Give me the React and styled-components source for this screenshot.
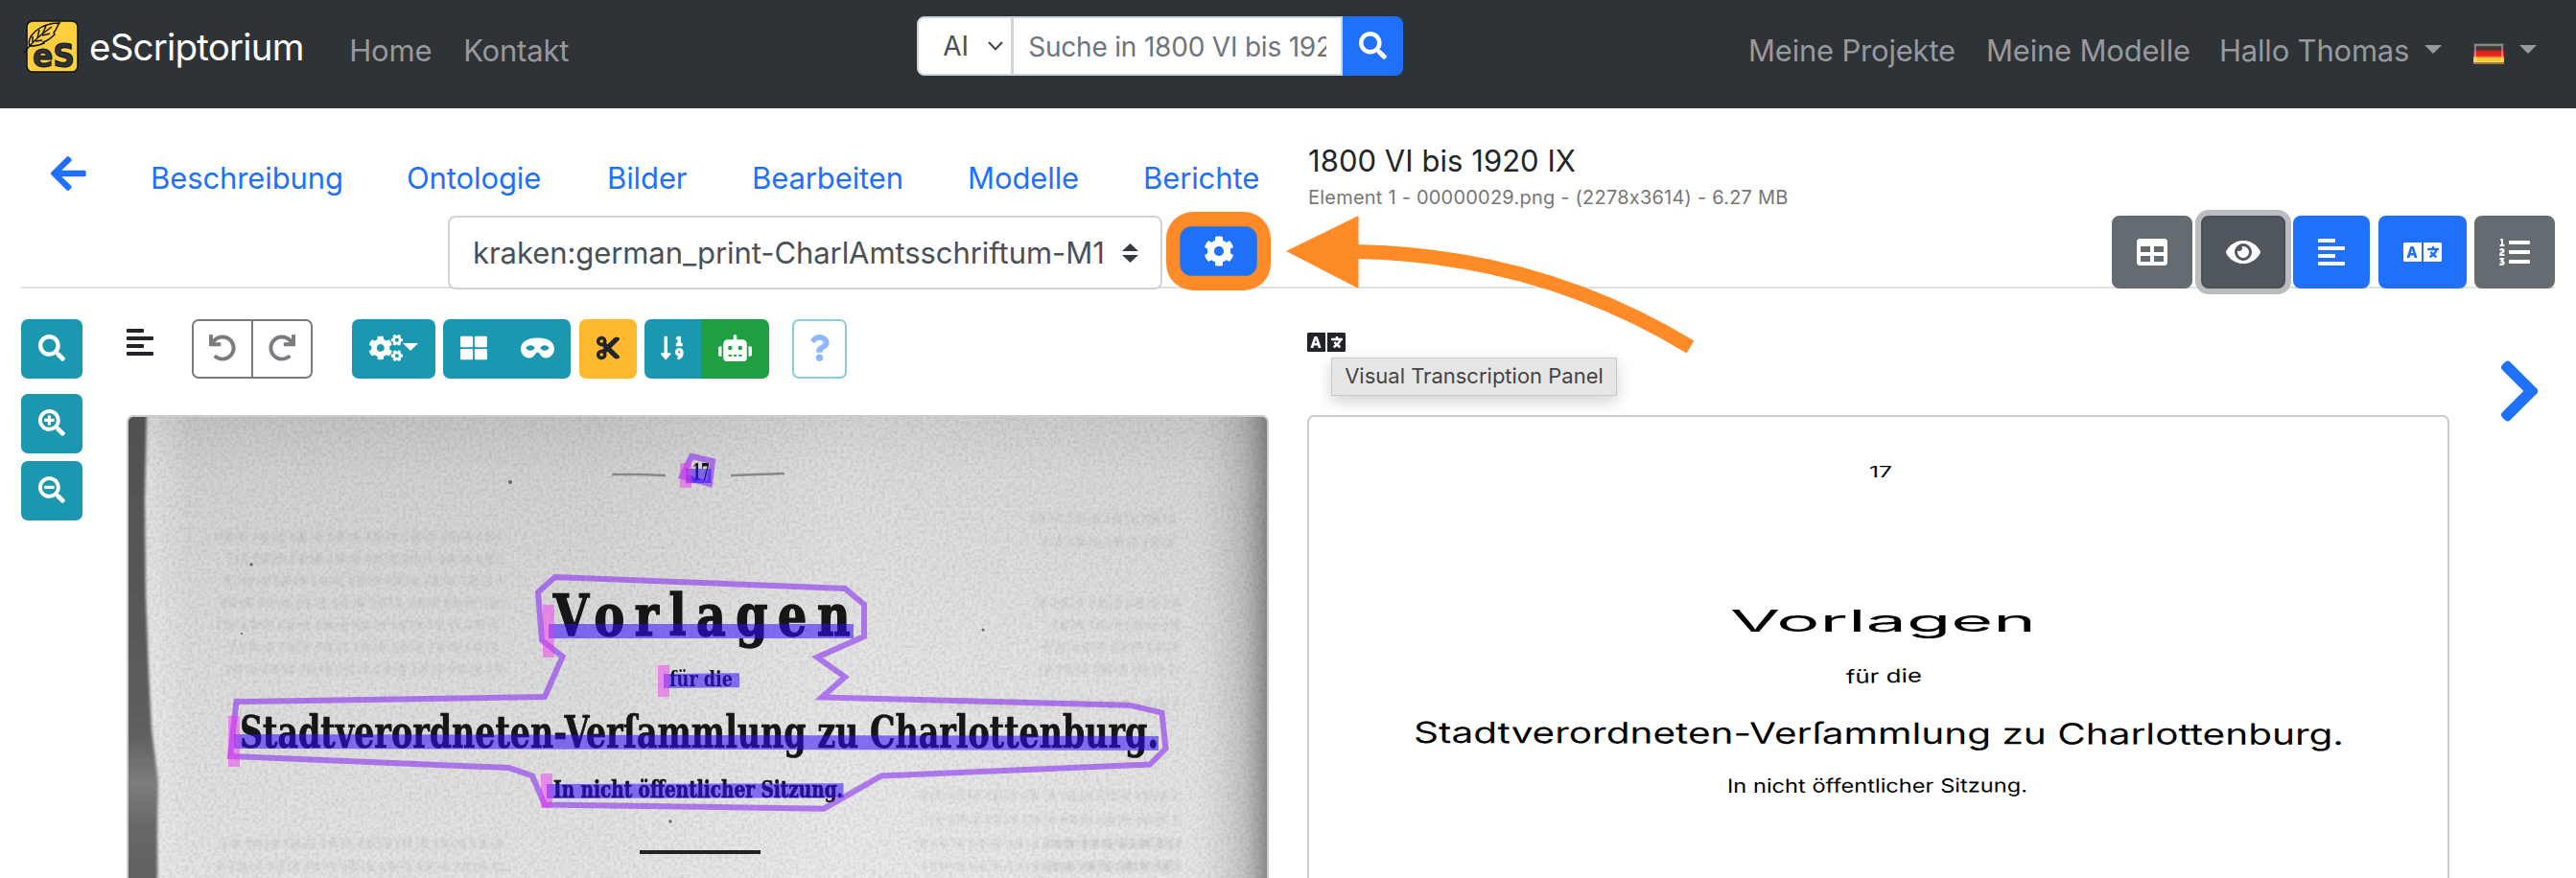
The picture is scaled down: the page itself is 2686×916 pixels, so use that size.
import React from "react";
import styled, { createGlobalStyle } from "styled-components";
import {
  FaAlignLeft,
  FaArrowLeft,
  FaChevronRight,
  FaCog,
  FaCogs,
  FaCut,
  FaEye,
  FaLanguage,
  FaListOl,
  FaMask,
  FaQuestion,
  FaRobot,
  FaSearch,
  FaSearchMinus,
  FaSearchPlus,
  FaSortNumericDown,
  FaTable,
  FaThLarge,
  FaUndo,
} from "react-icons/fa";

const GlobalStyle = createGlobalStyle`
  *, *::before, *::after { box-sizing: border-box; }
  body {
    margin: 0;
    background: #fff;
    color: #212529;
    font-family: Inter, "Liberation Sans", sans-serif;
    font-size: 31px;
    font-feature-settings: "calt" 0;
    overflow: hidden;
  }
  button, input { font-family: inherit; margin: 0; }
`;

const Page = styled.div`
  width: 2686px;
  height: 916px;
  overflow: hidden;
`;

/* Icon box: height in px, width in 512ths of the height, as in Font Awesome. */
const Glyph = styled.span`
  display: flex;
  flex: none;
  transform: ${(p) => (p.$mirror ? "scaleX(-1)" : "none")};

  && svg {
    height: ${(p) => p.$h || 28}px;
    width: ${(p) => ((p.$h || 28) * (p.$vw || 512)) / 512}px;
  }
`;

/* ---------- top bar ---------- */

const Navbar = styled.nav`
  display: flex;
  align-items: flex-start;
  height: 113px;
  padding: 0 40px 0 24px;
  background: #2e3338;
`;

const Brand = styled.a`
  display: flex;
  align-items: flex-start;
  width: 341px;
  padding-top: 19px;
  color: #fff;

  svg { flex: none; }
`;

const BrandName = styled.span`
  margin-left: 9px;
  padding-top: 6px;
  font-size: 38.5px;
  line-height: 48px;
  letter-spacing: -0.8px;
  white-space: nowrap;
`;

const NavItem = styled.a`
  display: flex;
  align-items: center;
  flex: none;
  width: ${(p) => p.$w}px;
  height: 48px;
  margin-top: 28px;
  color: #97999c;
  letter-spacing: -0.2px;
  white-space: nowrap;
`;

const Caret = styled.i`
  flex: none;
  margin: ${(p) => p.$m || "0"};
  border-top: ${(p) => p.$s || 9}px solid currentColor;
  border-left: ${(p) => p.$s || 9}px solid transparent;
  border-right: ${(p) => p.$s || 9}px solid transparent;
`;

const SearchGroup = styled.form`
  display: flex;
  width: 508px;
  height: 62px;
  margin: 17px 360px 0 312px;
`;

const ScopeSelect = styled.div`
  display: flex;
  align-items: center;
  justify-content: space-between;
  width: 100px;
  padding: 0 8px 0 25px;
  border: 2px solid #ced4da;
  border-radius: 8px 0 0 8px;
  background: #fff;
  color: #495057;
  font-size: 28px;
`;

const SearchField = styled.div`
  width: 345px;
  margin-left: -1px;
  padding: 0 15px;
  border: 2px solid #ced4da;
  background: #fff;
  color: #6c757d;
  font-size: 28px;
  line-height: 60px;
  letter-spacing: -0.2px;

  span {
    display: block;
    overflow: hidden;
    white-space: nowrap;
  }
`;

const SearchButton = styled.button`
  flex: 1;
  display: flex;
  align-items: center;
  justify-content: center;
  padding: 0 0 2px;
  border: 0;
  border-radius: 0 8px 8px 0;
  background: #1f71fd;
  color: #fff;
  font-size: 29px;
`;

/* ---------- document header ---------- */

const DocHeader = styled.header`
  display: flex;
  height: 188px;
  margin: 0 22px 0 22px;
  border-bottom: 2px solid #dee2e6;
`;

const HeaderLeft = styled.div`
  width: 1342px;
`;

const Tabs = styled.div`
  display: flex;
  height: 110px;
  padding: 48px 0 0 29px;
  color: #1f71fd;
`;

const BackArrow = styled.a`
  width: 106px;
  padding: 10px 0 0 2px;
  margin-top: -11px;
`;

const Tab = styled.a`
  flex: none;
  width: ${(p) => p.$w}px;
  height: 48px;
  line-height: 50px;
  letter-spacing: -0.1px;
  white-space: nowrap;
`;

const ModelRow = styled.div`
  display: flex;
  align-items: flex-start;
  padding-left: 445px;
`;

const ModelSelect = styled.div`
  display: flex;
  align-items: center;
  justify-content: space-between;
  width: 745px;
  height: 77px;
  margin-top: 2px;
  padding: 0 23px 0 24px;
  border: 2px solid #ced4da;
  border-radius: 8px;
  background: #fff;
  color: #495057;
  letter-spacing: -0.07px;
  white-space: nowrap;
`;

const ConfigHighlight = styled.div`
  width: 109px;
  height: 82px;
  margin: -2px 0 0 4px;
  padding: 15px 14px;
  border-radius: 28px;
  background: #ff8b28;
`;

const ConfigButton = styled.button`
  display: flex;
  align-items: center;
  justify-content: center;
  width: 81px;
  height: 52px;
  padding: 0;
  border: 1px solid #5b7ba8;
  border-radius: 12px;
  background: #1f71fd;
  color: #fff;
`;

const HeaderRight = styled.div`
  display: flex;
  flex: 1;
  justify-content: space-between;
`;

const DocTitle = styled.div`
  padding-top: 31px;
  white-space: nowrap;
`;

const DocName = styled.div`
  line-height: 48px;
  letter-spacing: 0.05px;
`;

const DocMeta = styled.div`
  margin-top: 2px;
  color: #777;
  font-size: 20px;
  line-height: 25px;
  letter-spacing: 0.22px;
`;

const PanelToggles = styled.div`
  display: flex;
  height: 76px;
  margin-top: 112px;
  gap: 8.5px;
`;

const PanelToggle = styled.button`
  display: flex;
  align-items: center;
  justify-content: center;
  width: ${(p) => p.$w}px;
  padding: 0;
  border: ${(p) => (p.$focus ? "2px solid #494f54" : "0")};
  border-radius: 8px;
  background: ${(p) => (p.$focus ? "#50575d" : p.$on ? "#1f71fd" : "#646b71")};
  box-shadow: ${(p) => (p.$focus ? "0 0 0 6px #b9bdc0" : "none")};
  color: #fff;
`;

/* ---------- workspace ---------- */

const Workspace = styled.main`
  display: flex;
  align-items: flex-start;
  padding-left: 22px;
`;

const ZoomTools = styled.div`
  display: flex;
  flex-direction: column;
  width: 110px;
  padding-top: 32px;
`;

const Tool = styled.button`
  display: flex;
  align-items: center;
  justify-content: center;
  flex: none;
  width: ${(p) => p.$w}px;
  height: 62px;
  margin: ${(p) => p.$m || "0"};
  padding: 0 0 2px;
  border: ${(p) => p.$border || "0"};
  border-radius: ${(p) => p.$r || "7px"};
  background: ${(p) => p.$bg || "#1b98b0"};
  color: ${(p) => p.$color || "#fff"};
`;

const Panel = styled.section`
  width: 1191px;
  margin-right: ${(p) => p.$gap || 0}px;
`;

const PanelBar = styled.div`
  display: flex;
  align-items: flex-start;
  height: 132px;
  padding-top: 32px;
  position: relative;
`;

const PanelGlyph = styled.span`
  width: 68px;
  margin-top: 8px;
`;

const Tooltip = styled.div`
  position: absolute;
  left: 25px;
  top: 72px;
  width: 298px;
  height: 40px;
  border: 1px solid #c8c8c8;
  background: #e6e6e6;
  box-shadow: 0 6px 16px rgba(0, 0, 0, 0.18);
  color: #444;
  font-size: 22px;
  line-height: 37px;
  text-align: center;
  white-space: nowrap;
`;

const PageFrame = styled.div`
  height: 600px;
  border: 2px solid #ccc;
  border-radius: 7px;
  background: #fff;
  overflow: hidden;

  svg { display: block; }
`;

const NextPage = styled.a`
  margin: 70px 0 0 50px;
  color: #1f71fd;
`;

const Annotation = styled.svg`
  position: absolute;
  left: 1330px;
  top: 215px;
  pointer-events: none;
`;

/* ---------- drawings ---------- */

const Logo = () => (
  <svg width="60" height="60" viewBox="0 0 60 60">
    <rect x="4" y="3" width="53" height="53" rx="6" fill="#ffcf3d" stroke="#111" strokeWidth="1.5" />
    <path
      d="M1 36C7 28 14 20 30 9M7 30C3 20 16 5 38 5C35 8 36 11 32 15L33 17C30 20 27 23 21 25L22 26C16 29 11 29 7 29M10 25L10 19M15 21L17 12M20 17L24 8M13 24L20 23M20 18L28 16"
      fill="none"
      stroke="#111"
      strokeWidth="1.5"
    />
    <text
      x="10"
      y="51"
      fontFamily="DejaVu Sans"
      fontWeight="bold"
      fontSize="34"
      textLength="44"
      lengthAdjust="spacingAndGlyphs"
      fill="#2e3338"
      stroke="#111"
      strokeWidth="1"
    >
      eS
    </text>
  </svg>
);

const Flag = () => (
  <svg width="32" height="22" viewBox="0 0 32 22">
    <defs>
      <linearGradient id="flag" x1="0" y1="0" x2="0" y2="1">
        <stop offset="0" stopColor="#55554c" />
        <stop offset=".28" stopColor="#3c3232" />
        <stop offset=".4" stopColor="#d81f20" />
        <stop offset=".6" stopColor="#ee2a22" />
        <stop offset=".72" stopColor="#f6cf35" />
        <stop offset="1" stopColor="#e3b936" />
      </linearGradient>
    </defs>
    <rect width="32" height="22" fill="url(#flag)" />
    <rect x="2" y="2" width="28" height="18" fill="none" stroke="#fff" strokeOpacity=".35" strokeWidth="2" />
    <path d="M0 21H32" stroke="#a07a26" strokeWidth="2" />
  </svg>
);

const FlagSlot = styled.span`
  display: flex;
  padding: 7px 0 0 1px;
`;

const ChevronDown = () => (
  <svg width="16" height="10" viewBox="0 0 16 10">
    <path d="M1 1L8 8.4L15 1" fill="none" stroke="#3c4043" strokeWidth="2" />
  </svg>
);

const UpDown = () => (
  <svg width="17" height="20" viewBox="0 0 17 20">
    <path d="M8.500 0L17 8H0ZM8.500 20L0 12H17Z" fill="#343a40" />
  </svg>
);

const INK = "#131313";
const GHOST_ROWS = [560, 583, 606, 629, 652, 675, 698, 880, 904];

const GhostPrint = ({ x, width, rows, seed }) => (
  <g stroke="#000" strokeOpacity=".045" strokeWidth="11" filter="url(#soft)">
    {rows.map((y, i) => (
      <path
        key={y}
        d={`M${x + ((i * seed) % 17)} ${y}H${x + width}`}
        strokeDasharray="5 3 9 4 3 2 7 6"
        strokeDashoffset={i * seed}
      />
    ))}
  </g>
);

const LineBox = ({ x1, x2, y, y2 = y, top, bottom }) => (
  <>
    <path d={`M${x1 + 6} ${y}L${x2} ${y2}`} stroke="#2d0afa" strokeOpacity=".54" strokeWidth="15" />
    <rect x={x1} y={top} width="12" height={bottom - top} fill="#f032f0" fillOpacity=".48" />
  </>
);

const Print = ({ x, y, size, width, weight = 0.6, children }) => (
  <text
    x={x}
    y={y}
    fontSize={size}
    textLength={width}
    lengthAdjust="spacingAndGlyphs"
    fontFamily="'DejaVu Serif Condensed', 'DejaVu Serif', serif"
    fontWeight="bold"
    fill={INK}
    stroke={INK}
    strokeWidth={weight}
  >
    {children}
  </text>
);

const ScannedPage = () => (
  <svg width="1187" height="596" viewBox="134 435 1187 596">
    <defs>
      <linearGradient id="paper" x1="0" y1="0" x2="0" y2="1">
        <stop offset="0" stopColor="#c4c4c4" />
        <stop offset=".1" stopColor="#d2d2d2" />
        <stop offset=".4" stopColor="#dcdcdc" />
        <stop offset="1" stopColor="#e8e8e8" />
      </linearGradient>
      <linearGradient id="edge" x1="0" y1="0" x2="1" y2="0">
        <stop offset="0" stopColor="#fff" stopOpacity=".35" />
        <stop offset=".04" stopColor="#fff" stopOpacity="0" />
        <stop offset=".4" stopColor="#fff" stopOpacity="0" />
        <stop offset=".62" stopColor="#fff" stopOpacity=".25" />
        <stop offset=".93" stopColor="#fff" stopOpacity=".1" />
        <stop offset=".98" stopColor="#777" stopOpacity=".3" />
        <stop offset="1" stopColor="#555" stopOpacity=".6" />
      </linearGradient>
      <linearGradient id="spine" x1="0" y1="0" x2="0" y2="1">
        <stop offset="0" stopColor="#505050" />
        <stop offset=".35" stopColor="#585858" />
        <stop offset=".55" stopColor="#5e5e5e" />
        <stop offset=".64" stopColor="#7c7c7c" />
        <stop offset=".72" stopColor="#666" />
        <stop offset="1" stopColor="#5c5c5c" />
      </linearGradient>
      <filter id="grain" x="0" y="0" width="1" height="1">
        <feTurbulence type="fractalNoise" baseFrequency=".3" numOctaves="2" seed="4" />
        <feColorMatrix values="0 0 0 0 0  0 0 0 0 0  0 0 0 0 0  .4 0 0 0 -.15" />
      </filter>
      <filter id="soft">
        <feGaussianBlur stdDeviation="1.6" />
      </filter>
      <filter id="ink">
        <feGaussianBlur stdDeviation=".7" />
      </filter>
    </defs>

    <rect x="134" y="435" width="1187" height="600" fill="url(#paper)" />
    <rect x="150" y="435" width="1171" height="600" fill="url(#edge)" />
    <rect x="134" y="435" width="1187" height="600" filter="url(#grain)" opacity=".5" />
    <path
      d="M130 430H153L151 520L152 620L155 700L158 760L165 815L164 860L165 1035H130Z"
      fill="url(#spine)"
      filter="url(#soft)"
    />

    <GhostPrint x={225} width={300} rows={GHOST_ROWS} seed={13} />
    <GhostPrint x={1075} width={155} rows={[541, 566, ...GHOST_ROWS.slice(3)]} seed={11} />
    <GhostPrint x={950} width={280} rows={[735, 830, 855, 880, 904]} seed={7} />
    <g fill="#666" filter="url(#ink)">
      <circle cx="532" cy="503" r="2" />
      <circle cx="262" cy="589" r="1.7" />
      <circle cx="699" cy="857" r="1.7" />
      <circle cx="1025" cy="657" r="1.5" />
      <circle cx="252" cy="661" r="1.1" />
    </g>

    <g filter="url(#ink)">
      <path d="M638 495H668L694 496M762 496L818 494" stroke="#888" strokeWidth="2.5" />
      <path d="M667 889H793" stroke="#222" strokeWidth="4" />
      <Print x={722} y={501} size={24} width={18} weight={0}>17</Print>
      <g letterSpacing="12">
        <Print x={577} y={663} size={60} width={320} weight={1.5}>Vorlagen</Print>
      </g>
      <Print x={698} y={716} size={23} width={66} weight={0}>für die</Print>
      <Print x={250} y={780} size={46} width={958}>Stadtverordneten-Verſammlung zu Charlottenburg.</Print>
      <Print x={577} y={832} size={24} width={302}>In nicht öffentlicher Sitzung.</Print>
    </g>

    <g fill="none" stroke="#8423f2" strokeOpacity=".56" strokeWidth="6">
      <path d="M578.700 602L561 618L565 668L586.600 685L568 727L246.500 732L240 789L530.500 801L555 809.500L568 839.500L859 843.700L919 809.500L1199 797.500L1215.500 781L1211.500 743.700L1177.500 735.700L857 727.500L881 706.300L852 685.700L901 664V630.700L881 614Z" />
      <path d="M721 476L743 481L740 505L711 497Z" />
    </g>
    <LineBox x1={709} x2={741.5} y={496.500} top={483} bottom={509} />
    <LineBox x1={566} x2={890} y={658.500} top={631} bottom={686} />
    <LineBox x1={686} x2={771} y={710.500} y2={709.700} top={694} bottom={727} />
    <LineBox x1={238} x2={1208} y={773.500} y2={775.500} top={747} bottom={800} />
    <LineBox x1={564} x2={879.5} y={825.500} y2={824.700} top={807} bottom={843} />
  </svg>
);

const TRANSCRIPTION = [
  { text: "17", x: 1950, y: 497.5, y2: 497.5, size: 15.5, width: 24 },
  { text: "Vorlagen", x: 1805, y: 658.7, y2: 658.7, size: 31, width: 319 },
  { text: "für die", x: 1926, y: 713, y2: 711.5, size: 19.5, width: 79 },
  { text: "Stadtverordneten-Verſammlung zu Charlottenburg.", x: 1475, y: 775, y2: 777, size: 30.5, width: 970 },
  { text: "In nicht öffentlicher Sitzung.", x: 1802, y: 827, y2: 826.5, size: 20, width: 313 },
];

const TranscriptionPage = () => (
  <svg width="1187" height="596" viewBox="1366 435 1187 596" fontFamily="Inter, sans-serif" fill="#000">
    {TRANSCRIPTION.map((l) => (
      <text
        key={l.text}
        x={l.x}
        y={l.y}
        fontSize={l.size}
        textLength={l.width}
        lengthAdjust="spacingAndGlyphs"
        transform={`rotate(${(Math.atan2(l.y2 - l.y, l.width) * 180) / Math.PI} ${l.x} ${l.y})`}
      >
        {l.text}
      </text>
    ))}
  </svg>
);

export default function App() {
  return (
    <Page>
      <GlobalStyle />
      <Navbar>
        <Brand>
          <Logo />
          <BrandName>eScriptorium</BrandName>
        </Brand>
        <NavItem $w={119}>Home</NavItem>
        <NavItem $w={161}>Kontakt</NavItem>
        <SearchGroup>
          <ScopeSelect>
            AI
            <ChevronDown />
          </ScopeSelect>
          <SearchField>
            <span>Suche in 1800 VI bis 1920 IX</span>
          </SearchField>
          <SearchButton type="button">
            <FaSearch />
          </SearchButton>
        </SearchGroup>
        <NavItem $w={248}>Meine Projekte</NavItem>
        <NavItem $w={243}>Meine Modelle</NavItem>
        <NavItem $w={264}>
          Hallo Thomas
          <Caret $m="0 32px 2px auto" />
        </NavItem>
        <NavItem $w={68}>
          <FlagSlot>
            <Flag />
          </FlagSlot>
          <Caret $m="0 0 2px 16px" />
        </NavItem>
      </Navbar>

      <DocHeader>
        <HeaderLeft>
          <Tabs>
            <BackArrow>
              <Glyph $h={42} $vw={448}><FaArrowLeft /></Glyph>
            </BackArrow>
            <Tab $w={267}>Beschreibung</Tab>
            <Tab $w={209}>Ontologie</Tab>
            <Tab $w={151}>Bilder</Tab>
            <Tab $w={225}>Bearbeiten</Tab>
            <Tab $w={183}>Modelle</Tab>
            <Tab $w={130}>Berichte</Tab>
          </Tabs>
          <ModelRow>
            <ModelSelect>
              kraken:german_print-CharlAmtsschriftum-M1
              <UpDown />
            </ModelSelect>
            <ConfigHighlight>
              <ConfigButton>
                <Glyph $h={32}><FaCog /></Glyph>
              </ConfigButton>
            </ConfigHighlight>
          </ModelRow>
        </HeaderLeft>
        <HeaderRight>
          <DocTitle>
            <DocName>1800 VI bis 1920 IX</DocName>
            <DocMeta>Element 1 - 00000029.png - (2278x3614) - 6.27 MB</DocMeta>
          </DocTitle>
          <PanelToggles>
            <PanelToggle $w={84}><Glyph $h={32}><FaTable /></Glyph></PanelToggle>
            <PanelToggle $w={88} $focus><Glyph $h={32} $vw={576}><FaEye /></Glyph></PanelToggle>
            <PanelToggle $w={80} $on><Glyph $h={32} $vw={448}><FaAlignLeft /></Glyph></PanelToggle>
            <PanelToggle $w={92} $on><Glyph $h={32} $vw={640}><FaLanguage /></Glyph></PanelToggle>
            <PanelToggle $w={84}><Glyph $h={32}><FaListOl /></Glyph></PanelToggle>
          </PanelToggles>
        </HeaderRight>
      </DocHeader>

      <Workspace>
        <ZoomTools>
          <Tool $w={64}><Glyph><FaSearch /></Glyph></Tool>
          <Tool $w={64} $m="16px 0 0"><Glyph><FaSearchPlus /></Glyph></Tool>
          <Tool $w={64} $m="8px 0 0"><Glyph><FaSearchMinus /></Glyph></Tool>
        </ZoomTools>

        <Panel $gap={40}>
          <PanelBar>
            <PanelGlyph><Glyph $h={32} $vw={448}><FaAlignLeft /></Glyph></PanelGlyph>
            <Tool $w={64} $r="7px 0 0 7px" $bg="#fff" $color="#787c80" $border="2px solid #787c80">
              <Glyph><FaUndo /></Glyph>
            </Tool>
            <Tool $w={64} $m="0 41px 0 -2px" $r="0 7px 7px 0" $bg="#fff" $color="#787c80" $border="2px solid #787c80">
              <Glyph $mirror><FaUndo /></Glyph>
            </Tool>
            <Tool $w={87} $m="0 8px 0 0">
              <Glyph $vw={640}><FaCogs /></Glyph>
              <Caret $s={8} $m="0 0 3px" />
            </Tool>
            <Tool $w={64} $r="7px 0 0 7px"><Glyph><FaThLarge /></Glyph></Tool>
            <Tool $w={69} $m="0 9px 0 0" $r="0 7px 7px 0"><Glyph $vw={640}><FaMask /></Glyph></Tool>
            <Tool $w={60} $m="0 8px 0 0" $bg="#ffb92e" $color="#212529"><Glyph $vw={448}><FaCut /></Glyph></Tool>
            <Tool $w={59} $r="7px 0 0 7px"><Glyph $vw={448}><FaSortNumericDown /></Glyph></Tool>
            <Tool $w={71} $m="0 24px 0 0" $r="0 7px 7px 0" $bg="#1f9f42"><Glyph $vw={640}><FaRobot /></Glyph></Tool>
            <Tool $w={57} $bg="#fff" $color="#8fb8ff" $border="2px solid #8cccd6"><Glyph $vw={384}><FaQuestion /></Glyph></Tool>
          </PanelBar>
          <PageFrame>
            <ScannedPage />
          </PageFrame>
        </Panel>

        <Panel>
          <PanelBar>
            <PanelGlyph><Glyph $h={32} $vw={640}><FaLanguage /></Glyph></PanelGlyph>
            <Tooltip>Visual Transcription Panel</Tooltip>
          </PanelBar>
          <PageFrame>
            <TranscriptionPage />
          </PageFrame>
        </Panel>

        <NextPage>
          <Glyph $h={74} $vw={320}><FaChevronRight /></Glyph>
        </NextPage>
      </Workspace>

      <Annotation width="450" height="165" viewBox="1330 215 450 165">
        <path d="M1341 262L1416.500 225V301Z" fill="#ff8b28" />
        <path d="M1414 262.500Q1604 266 1762.500 362" fill="none" stroke="#ff8b28" strokeWidth="15" />
      </Annotation>
    </Page>
  );
}
